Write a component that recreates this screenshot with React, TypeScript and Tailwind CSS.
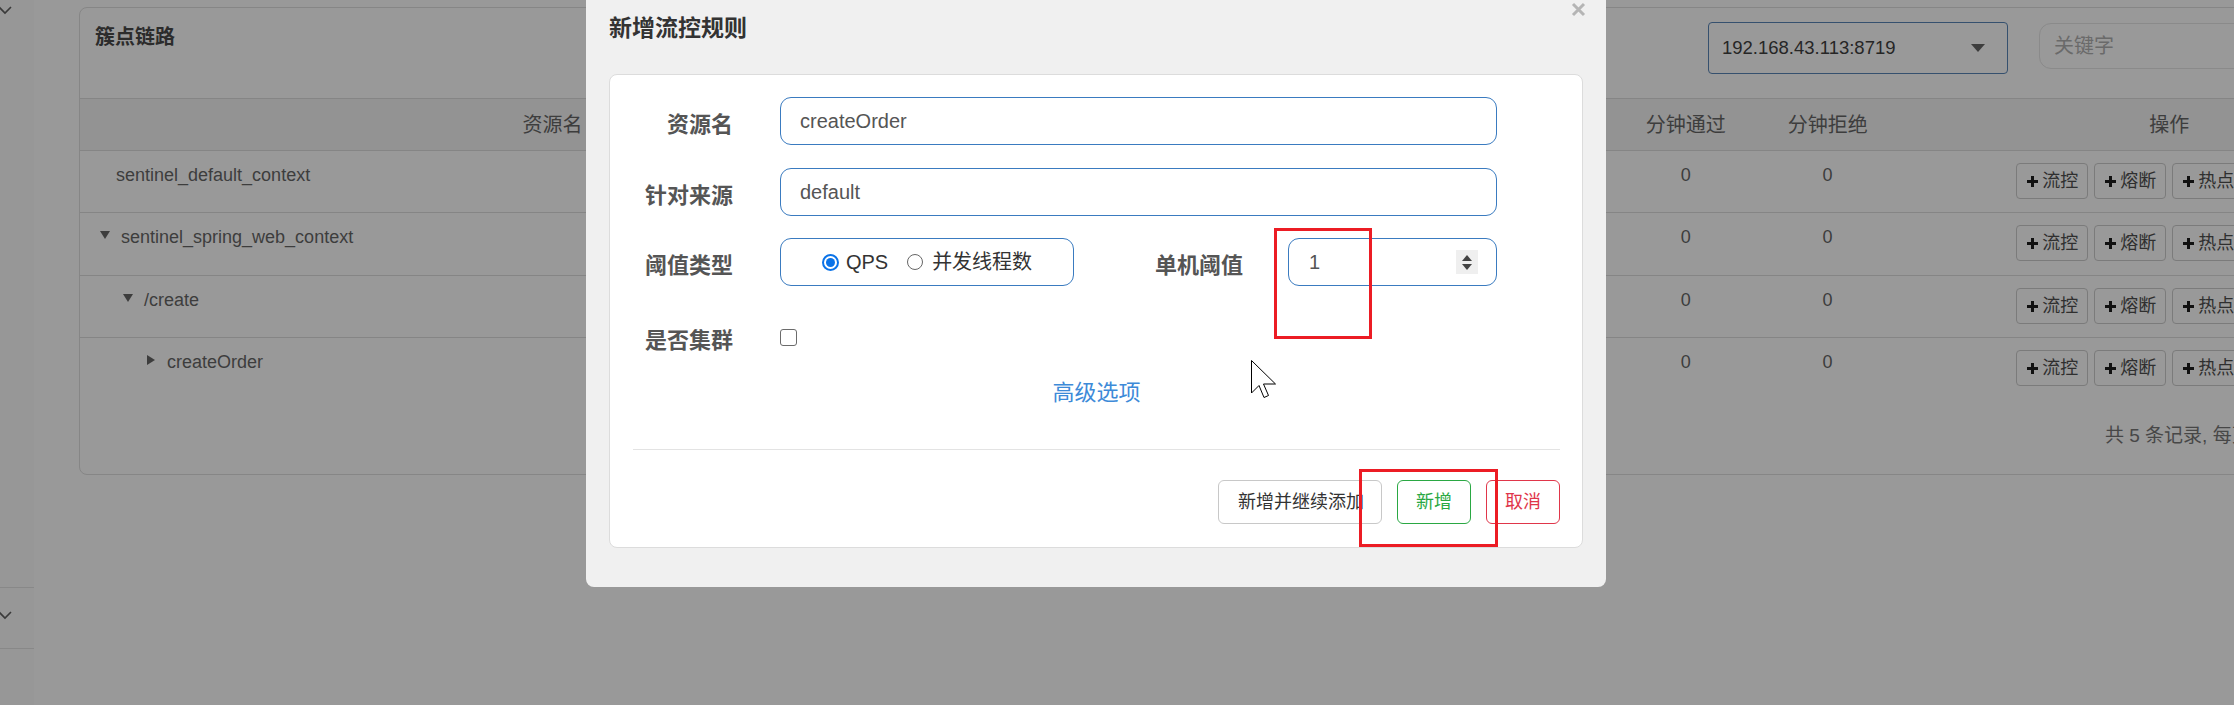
import React from "react";

const font = "font-['Liberation_Sans','Noto_Sans_CJK_SC',sans-serif]";

type Row = { name: string; arrow?: "down" | "right"; pad: number };

const rows: Row[] = [
  { name: "sentinel_default_context", pad: 36 },
  { name: "sentinel_spring_web_context", arrow: "down", pad: 19 },
  { name: "/create", arrow: "down", pad: 42 },
  { name: "createOrder", arrow: "right", pad: 65 },
];

const Caret = ({ dir }: { dir: "down" | "right" }) =>
  dir === "down" ? (
    <svg width="12" height="10" viewBox="0 0 12 10" className="mr-[10px] mt-[4px]">
      <path d="M1 1h10L6 9z" fill="#3d3d3d" />
    </svg>
  ) : (
    <svg width="12" height="12" viewBox="0 0 12 12" className="mr-[10px] mt-[3px]">
      <path d="M2 1v10l8-5z" fill="#3d3d3d" />
    </svg>
  );

const ActionButton = ({ label }: { label: string }) => (
  <div className="h-[36px] w-[72px] flex items-center justify-center gap-[3px] border border-[#7b7b7b] rounded-[4px] text-[18px] text-[#2f2f2f]">
    <svg width="13" height="13" viewBox="0 0 13 13">
      <path d="M6.5 1v11M1 6.5h11" stroke="#111" strokeWidth="3" />
    </svg>
    <span>{label}</span>
  </div>
);

const Sidebar = () => (
  <div className="w-[34px] h-full shrink-0 bg-[#979797] flex flex-col">
    <svg width="14" height="10" viewBox="0 0 14 10" className="mt-[5px] ml-[-2px]">
      <path d="M1 2l6 6 6-6" stroke="#3a3a3a" strokeWidth="1.6" fill="none" />
    </svg>
    <div className="mt-[572px] border-t border-[#888]" />
    <svg width="14" height="10" viewBox="0 0 14 10" className="mt-[22px] ml-[-2px]">
      <path d="M1 2l6 6 6-6" stroke="#3a3a3a" strokeWidth="1.6" fill="none" />
    </svg>
    <div className="mt-[28px] border-t border-[#888]" />
  </div>
);

const Background = () => (
  <div className="flex-1 pl-[45px] pt-[7px]">
    <div className="w-[2362px] h-[468px] border border-[#868686] rounded-[8px] flex flex-col">
      {/* card header */}
      <div className="h-[90px] flex items-start">
        <div className="w-[1628px] pl-[15px] pt-[14px] text-[20px] leading-[30px] font-bold text-[#2c2c2c]">
          簇点链路
        </div>
        <div className="mt-[14px] w-[300px] h-[52px] border border-[#35506e] rounded-[4px] flex items-center pl-[13px] pr-[22px] text-[18.5px] text-[#262626]">
          <span>192.168.43.113:8719</span>
          <svg width="14" height="8" viewBox="0 0 14 8" className="ml-auto">
            <path d="M0 0h14L7 8z" fill="#3d3d3d" />
          </svg>
        </div>
        <div className="mt-[15px] ml-[31px] w-[300px] h-[46px] border border-[#8a8a8a] rounded-[12px] flex items-center pl-[14px] text-[20px] text-[#6a6a6a]">
          关键字
        </div>
      </div>

      {/* header row */}
      <div className="h-[52px] border-t border-[#858585] bg-[#939393] flex items-center text-[20px] text-[#3d3d3d]">
        <div className="w-[946px] text-center">资源名</div>
        <div className="w-[590px] flex">
          <span className="w-[150px] text-center">通过QPS</span>
          <span className="w-[150px] text-center">拒绝QPS</span>
          <span className="w-[140px] text-center">并发数</span>
          <span className="w-[150px] text-center">平均RT</span>
        </div>
        <div className="w-[142px] text-center">分钟通过</div>
        <div className="w-[142px] text-center">分钟拒绝</div>
        <div className="w-[542px] text-center">操作</div>
      </div>

      {/* rows */}
      {rows.map((r, i) => (
        <div
          key={r.name}
          className={`flex border-t border-[#858585] text-[18px] text-[#3d3d3d] ${
            i === 1 ? "h-[63px]" : "h-[62px]"
          }`}
        >
          <div className="w-[946px] flex items-start pt-[13px] leading-[22px]" style={{ paddingLeft: r.pad }}>
            {r.arrow && <Caret dir={r.arrow} />}
            <span>{r.name}</span>
          </div>
          <div className="w-[590px]" />
          <div className="w-[142px] text-center pt-[13px] leading-[22px]">0</div>
          <div className="w-[142px] text-center pt-[13px] leading-[22px]">0</div>
          <div className="w-[542px] flex justify-center gap-[6px] pt-[12px]">
            <ActionButton label="流控" />
            <ActionButton label="熔断" />
            <ActionButton label="热点" />
            <ActionButton label="授权" />
          </div>
        </div>
      ))}

      {/* footer */}
      <div className="flex-1 flex items-center pl-[2025px] text-[19px] text-[#474747]">
        共 5 条记录, 每页 16 条记录
      </div>
    </div>
  </div>
);

const Field = ({ children }: { children: React.ReactNode }) => (
  <div className="h-[48px] border border-[#3a7bc0] rounded-[11px] flex items-center bg-white">{children}</div>
);

const Label = ({ children }: { children: React.ReactNode }) => (
  <div className="w-[100px] shrink-0 text-right text-[22px] font-bold text-[#555] pt-[6px]">{children}</div>
);

const Dialog = () => (
  <div className="absolute left-[586px] top-0 w-[1020px] h-[587px] bg-[#f0f0f0] rounded-b-[8px] px-[23px] flex flex-col">
    <svg width="15" height="15" viewBox="0 0 15 15" className="absolute right-[20px] top-[2px]">
      <path d="M2 2l11 11M13 2L2 13" stroke="#b5b5b5" strokeWidth="3" />
    </svg>
    <div className="h-[56px] flex items-center text-[23px] font-bold text-[#333]">新增流控规则</div>

    <div className="mt-[18px] bg-white border border-[#dcdcdc] rounded-[8px] pt-[22px] pb-[23px] pl-[23px] pr-[22px] flex flex-col">
      <div className="flex items-center">
        <Label>资源名</Label>
        <div className="ml-[47px] w-[717px]">
          <Field>
            <span className="pl-[19px] text-[20px] text-[#555]">createOrder</span>
          </Field>
        </div>
      </div>

      <div className="flex items-center mt-[23px]">
        <Label>针对来源</Label>
        <div className="ml-[47px] w-[717px]">
          <Field>
            <span className="pl-[19px] text-[20px] text-[#555]">default</span>
          </Field>
        </div>
      </div>

      <div className="flex items-center mt-[22px]">
        <Label>阈值类型</Label>
        <div className="ml-[47px] w-[294px]">
          <Field>
            <div className="w-full flex items-center justify-center text-[20px] text-[#333]">
              <span className="w-[17px] h-[17px] rounded-full border-[2px] border-[#0b73e8] flex items-center justify-center">
                <span className="w-[9px] h-[9px] rounded-full bg-[#0b73e8]" />
              </span>
              <span className="ml-[7px]">QPS</span>
              <span className="ml-[19px] w-[16px] h-[16px] rounded-full border border-[#666]" />
              <span className="ml-[9px]">并发线程数</span>
            </div>
          </Field>
        </div>
        <div className="w-[169px] text-right text-[22px] font-bold text-[#555] pt-[6px]">单机阈值</div>
        <div className="ml-[45px] w-[209px]">
          <Field>
            <span className="pl-[20px] text-[20px] text-[#555]">1</span>
            <div className="ml-auto mr-[18px] w-[22px] h-[24px] bg-[#efefef] flex flex-col items-center justify-center gap-[3px]">
              <svg width="10" height="6" viewBox="0 0 10 6">
                <path d="M0 6h10L5 0z" fill="#444" />
              </svg>
              <svg width="10" height="6" viewBox="0 0 10 6">
                <path d="M0 0h10L5 6z" fill="#444" />
              </svg>
            </div>
          </Field>
        </div>
      </div>

      <div className="flex items-center mt-[27px] h-[48px]">
        <Label>是否集群</Label>
        <div className="ml-[47px] w-[17px] h-[17px] border-[1.5px] border-[#6b6b6b] rounded-[3px] bg-white" />
      </div>

      <div className="mt-[16px] text-center text-[22px] leading-[32px] text-[#3d8ad8]">高级选项</div>

      <div className="mt-[40px] border-t border-[#e3e3e3]" />

      <div className="mt-[30px] flex justify-end gap-[15px] text-[18px]">
        <div className="w-[164px] h-[44px] border border-[#c8c8c8] rounded-[6px] flex items-center pl-[19px] text-[#333] overflow-hidden whitespace-nowrap">
          新增并继续添加
        </div>
        <div className="w-[74px] h-[44px] border border-[#2aa843] rounded-[6px] flex items-center justify-center text-[#2aa843]">
          新增
        </div>
        <div className="w-[74px] h-[44px] border border-[#e0364a] rounded-[6px] flex items-center justify-center text-[#e0364a]">
          取消
        </div>
      </div>
    </div>
  </div>
);

export default function App() {
  return (
    <div className={`relative w-[2234px] h-[705px] overflow-hidden bg-[#999999] flex ${font}`}>
      <Sidebar />
      <Background />
      <Dialog />

      {/* red annotation boxes */}
      <div className="absolute left-[1274px] top-[228px] w-[98px] h-[111px] border-[3px] border-[#ec1c24]" />
      <div className="absolute left-[1359px] top-[469px] w-[139px] h-[78px] border-[3px] border-[#ec1c24]" />

      {/* mouse cursor */}
      <svg width="27" height="40" viewBox="0 0 27 40" className="absolute left-[1251px] top-[360px]">
        <path d="M0.5 0.5V33L8 25.5L13 37.5L17.5 35.5L12.5 24H24.5Z" fill="#fff" stroke="#000" strokeWidth="1" />
      </svg>
    </div>
  );
}
